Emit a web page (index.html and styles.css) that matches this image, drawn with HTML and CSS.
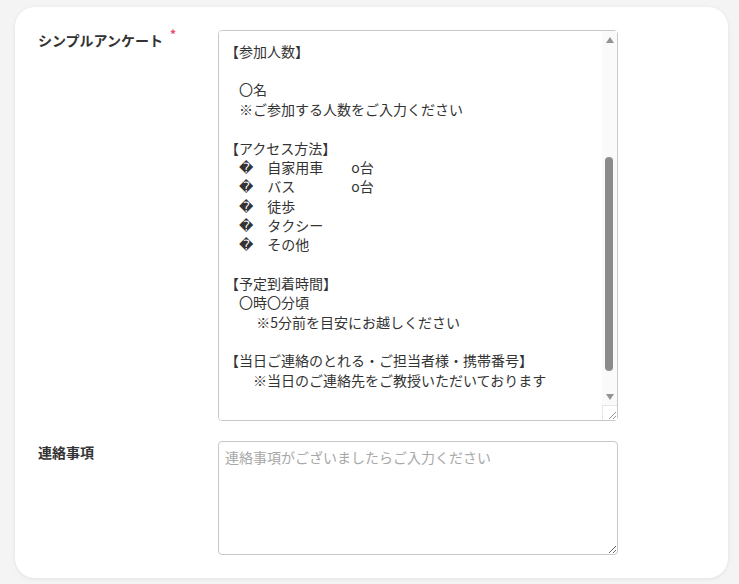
FILE: index.html
```html
<!DOCTYPE html>
<html lang="ja">
<head>
  <meta charset="UTF-8" />
  <meta name="viewport" content="width=device-width, initial-scale=1.0"/>
  <title>アンケート</title>
  <link rel="stylesheet" href="styles.css">
</head>
<body>

<form class="form-card">
  <div class="form-row">
    <label class="form-label" for="survey">シンプルアンケート<span class="required">*</span></label>
    <div class="input-wrap">
      <textarea id="survey" class="form-input survey-input">【ご来場日】
　〇月〇日（〇）

【代表者名】
　
　※フルネームでご入力ください

【会社名・部署名】
　
　※正式名称でご入力ください

【参加人数】

　〇名
　※ご参加する人数をご入力ください

【アクセス方法】
　&#xFFFD;　自家用車　　o台
　&#xFFFD;　バス　　　　o台
　&#xFFFD;　徒歩
　&#xFFFD;　タクシー
　&#xFFFD;　その他

【予定到着時間】
　〇時〇分頃
　　 ※5分前を目安にお越しください

【当日ご連絡のとれる・ご担当者様・携帯番号】
　　※当日のご連絡先をご教授いただいております


</textarea>
      <div class="scrollbar">
        <div class="scroll-btn"><span class="arrow-up"></span></div>
        <div class="scroll-track" id="track">
          <div class="scroll-thumb" id="thumb"></div>
        </div>
        <div class="scroll-btn"><span class="arrow-down"></span></div>
      </div>
    </div>
  </div>

  <div class="form-row">
    <label class="form-label" for="note">連絡事項</label>
    <textarea id="note" class="form-input note-input" placeholder="連絡事項がございましたらご入力ください"></textarea>
  </div>
</form>

<script>
  const survey = document.getElementById("survey");
  const track = document.getElementById("track");
  const thumb = document.getElementById("thumb");

  // Keep the drawn scrollbar in step with the textarea
  const syncThumb = () => {
    const trackH = track.clientHeight;
    const maxScroll = survey.scrollHeight - survey.clientHeight;
    const thumbH = Math.round(trackH * survey.clientHeight / survey.scrollHeight) + 3;
    const top = maxScroll > 0 ? (trackH - thumbH) * survey.scrollTop / maxScroll : 0;
    thumb.style.height = thumbH + "px";
    thumb.style.top = Math.round(top) + "px";
  };

  survey.onscroll = syncThumb;

  survey.scrollTop = 208;
  syncThumb();
</script>

</body>
</html>
```

FILE: styles.css
```css
body {
  margin: 0;
  padding: 7px 11px 6px 15px;
  background: #f4f4f4;
  color: #333;
  font-family: "Noto Sans CJK JP", "Noto Sans", sans-serif;
}

.form-card {
  background: white;
  border-radius: 20px;
  box-shadow: 0 1px 4px rgba(0, 0, 0, 0.08);
  padding: 23px 0 23px 23px;
  display: flex;
  flex-direction: column;
  gap: 20px;
}

.form-row {
  display: flex;
  align-items: flex-start;
}

.form-label {
  width: 180px;
  padding-top: 0;
  font-size: 14px;
  font-weight: bold;
  line-height: 20px;
  color: #333;
}

.form-row + .form-row .form-label {
  padding-top: 1px;
}

.form-label .required {
  position: relative;
  top: -7px;
  margin-left: 7px;
  color: #e8476a;
  font-size: 12px;
}

.form-input {
  box-sizing: border-box;
  width: 400px;
  margin: 0;
  padding: 6px;
  border: 1px solid #c8c8c8;
  border-radius: 4px;
  font-family: "Noto Sans CJK JP", "DejaVu Sans", sans-serif;
  font-size: 14px;
  line-height: 19.35px;
  color: #333;
  background: white;
}

.form-input::placeholder {
  color: #a8a8a8;
}

.note-input {
  height: 114px;
}

/* survey template with its own scrollbar */
.input-wrap {
  position: relative;
  width: 400px;
  height: 391px;
}

.survey-input {
  display: block;
  height: 391px;
}

.survey-input::-webkit-scrollbar {
  width: 15px;
  background: transparent;
}

.survey-input::-webkit-scrollbar-thumb,
.survey-input::-webkit-scrollbar-track {
  background: transparent;
}

.survey-input::-webkit-scrollbar-corner {
  background: white;
}

.survey-input::-webkit-resizer {
  background:
    linear-gradient(135deg, transparent 60%, #999 60% 66%, transparent 66% 78%, #999 78% 84%, transparent 84%) no-repeat right 1px bottom 1px / 9px 9px,
    white;
  border-top: 1px solid #e6e6e6;
  border-left: 1px solid #e6e6e6;
}

.scrollbar {
  position: absolute;
  top: 1px;
  right: 1px;
  width: 15px;
  height: 374px;
  display: flex;
  flex-direction: column;
  background: #fafafa;
  pointer-events: none;
}

.scroll-btn {
  height: 16px;
  display: flex;
  justify-content: center;
  align-items: center;
}

.arrow-up {
  margin-top: 2px;
  border-left: 4.5px solid transparent;
  border-right: 4.5px solid transparent;
  border-bottom: 6px solid #939393;
}

.arrow-down {
  border-left: 4.5px solid transparent;
  border-right: 4.5px solid transparent;
  border-top: 6px solid #939393;
}

.scroll-track {
  position: relative;
  flex: 1;
}

.scroll-thumb {
  position: absolute;
  left: 3px;
  width: 8px;
  border-radius: 4px;
  background: #8b8b8b;
}
```
